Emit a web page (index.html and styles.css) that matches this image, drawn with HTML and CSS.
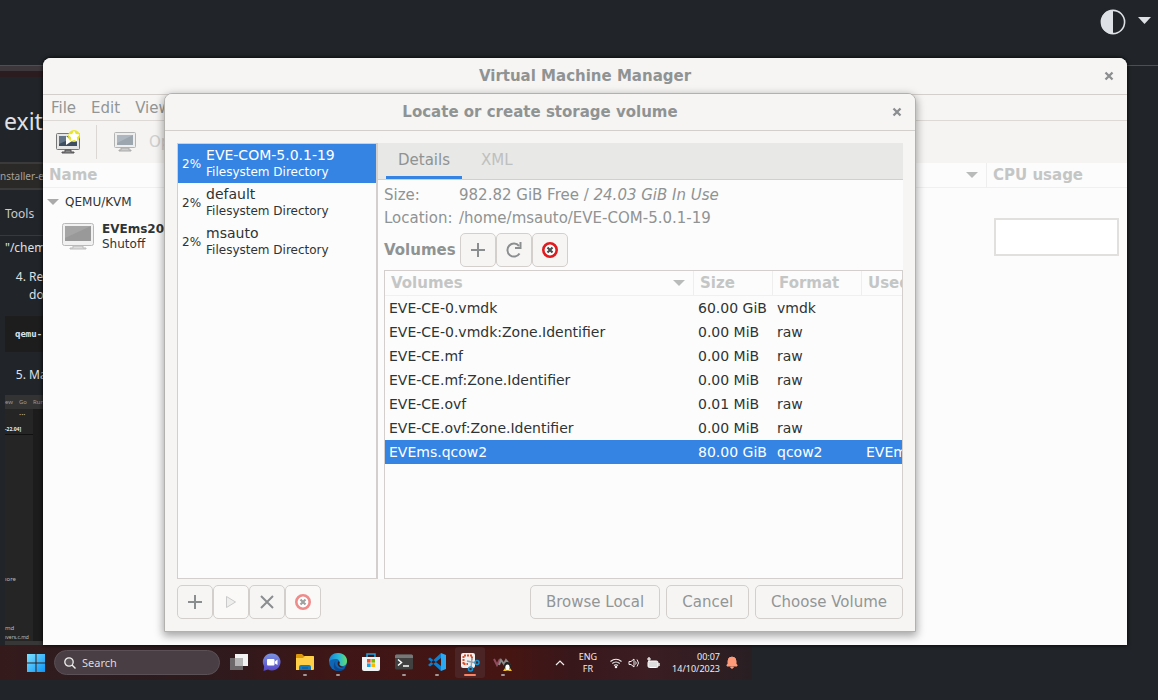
FILE: index.html
```
<!DOCTYPE html>
<html lang="en">
<head>
<meta charset="utf-8">
<title>Virtual Machine Manager</title>
<link rel="stylesheet" href="styles.css">
</head>
<body>
<div class="desktop">
  <header class="site-bar">
    <button class="theme" aria-label="Theme">
      <svg width="52" height="26" viewBox="0 0 52 26"><circle cx="13" cy="13" r="11.6" fill="none" stroke="#dee2e6" stroke-width="1.6"/><path d="M13 1a12 12 0 0 0 0 24z" fill="#dee2e6"/><path d="M38 8h13l-6.500 7z" fill="#dee2e6"/></svg>
    </button>
  </header>

  <main class="article">
    <div class="strip"></div>
    <h1 class="exit">exit</h1>
    <div class="file-tab">nstaller-ev</div>
    <div class="tools">Tools</div>
    <div class="path">"/chem</div>
    <ol class="steps" start="4"><li>Re<br>do</li></ol>
    <pre class="code">qemu-</pre>
    <ol class="steps last" start="5"><li>Ma</li></ol>
    <div class="editor">
      <div class="editor-menu"><span>ew</span><span>Go</span><span>Run</span></div>
      <div class="editor-side">
        <div class="dots">···</div>
        <div class="version">-22.04]</div>
        <div class="tree-a">ıore</div>
        <div class="tree-b">md</div>
        <div class="tree-c">ıvers.c.md</div>
      </div>
    </div>
  </main>

  <nav class="taskbar" aria-label="Taskbar">
    <button class="start" aria-label="Start"><svg width="18" height="18" viewBox="0 0 18 18"><defs><linearGradient id="w" x2="1" y2="1"><stop stop-color="#7be0ff"/><stop offset="1" stop-color="#0c94f5"/></linearGradient></defs><path d="M0 0h8.500v8.500H0zM9.500 0H18v8.500H9.500zM0 9.500h8.500V18H0zM9.500 9.500H18V18H9.500z" fill="url(#w)"/></svg></button>
    <label class="search"><svg width="12" height="12" viewBox="0 0 12 12"><circle cx="5" cy="5" r="4.200" fill="#5b5358" stroke="#eee" stroke-width="1.300"/><path d="M8 8l3.500 3.500" stroke="#eee" stroke-width="1.400"/></svg><input type="text" placeholder="Search" aria-label="Search"></label>
    <div class="apps">
      <button class="app" aria-label="Task view"><svg width="20" height="20" viewBox="0 0 20 20"><path d="M6 2h13v12H6z" fill="#f2f2f2"/><path d="M1 6h13v12H1z" fill="#777" opacity=".85"/><path d="M6 6h8v8H6z" fill="#b5b5b5"/></svg></button>
      <button class="app" aria-label="Chat"><svg width="20" height="20" viewBox="0 0 20 20"><defs><linearGradient id="c" x2="0" y2="1"><stop stop-color="#7b94df"/><stop offset="1" stop-color="#5646c8"/></linearGradient></defs><path d="M10 1.500a8.500 8.500 0 1 1-4 16L1.500 19l.7-4.500A8.500 8.500 0 0 1 10 1.500z" fill="url(#c)"/><rect x="5" y="7" width="7.500" height="6.500" rx="1" fill="#fff"/><path d="M13 9.500l2.500-2v5.500L13 11.500z" fill="#fff"/></svg></button>
      <button class="app open" aria-label="Files"><svg width="20" height="20" viewBox="0 0 20 20"><path d="M1 3q0-1 1-1h5l2 2h9q1 0 1 1v5H1z" fill="#dc9808"/><path d="M1 6h7l2-2h8q1 0 1 1v12q0 1-1 1H1z" fill="#ffcf48"/><path d="M4 18v-3q0-2 2-2h8q2 0 2 2v3z" fill="#1479bd"/><path d="M7 16h6" stroke="#0a548d"/></svg></button>
      <button class="app open" aria-label="Edge"><svg width="20" height="20" viewBox="0 0 20 20"><defs><linearGradient id="e" x2="1"><stop stop-color="#1681d7"/><stop offset=".55" stop-color="#28b9d6"/><stop offset="1" stop-color="#67dc65"/></linearGradient></defs><circle cx="10" cy="10" r="9" fill="#0e66b5"/><path d="M1 10C1 4 5 1 10 1c6 0 9 4 9 8 0 3-2 5-5 5-2 0-3-.7-2.500-2 1-3-1-5-4-5C4 7 2 8 1 10z" fill="url(#e)"/><path d="M7.500 9c-1.500 4 1.500 8 6 8 2 0 3.500-.7 4.500-2-1 2.500-4 4-7 4-5 0-7-5-3.500-10z" fill="#0b4a92"/><path d="M10.500 9q-2 3 .5 5.500 2 1.700 5.500.5-3 .5-5-2-.7-1 .2-2.500z" fill="#3b161b"/></svg></button>
      <button class="app" aria-label="Store"><svg width="20" height="20" viewBox="0 0 20 20"><path d="M6 5V2h8v3" fill="none" stroke="#21a3e0" stroke-width="1.500"/><path d="M1 5h18v12q0 2-2 2H3q-2 0-2-2z" fill="#f1f2f3"/><path d="M6 7h3.600v3.600H6z" fill="#f05023"/><path d="M10.400 7H14v3.600h-3.600z" fill="#7db800"/><path d="M6 11.400h3.600V15H6z" fill="#16a2e8"/><path d="M10.400 11.400H14V15h-3.600z" fill="#fdb900"/></svg></button>
      <button class="app open" aria-label="Terminal"><svg width="20" height="20" viewBox="0 0 20 20"><rect x="1" y="2.500" width="18" height="15" rx="1.500" fill="#414141"/><path d="M1 4q0-1.500 1.500-1.500h15Q19 2.500 19 4v2H1z" fill="#777"/><path d="M4 7.500l3.500 3L4 13.500" fill="none" stroke="#fff" stroke-width="1.500"/><path d="M9 14h6" stroke="#fff" stroke-width="1.500"/></svg></button>
      <button class="app open" aria-label="Code"><svg width="20" height="20" viewBox="0 0 20 20"><path d="M14 1l5 2v14l-5 2z" fill="#2aa8f2"/><path d="M14 1v5L3 14.500 1 13zM14 19v-5L3 5.500 1 7z" fill="#0b7fd0"/></svg></button>
      <button class="app open active" aria-label="Snipping tool"><svg width="20" height="20" viewBox="0 0 20 20"><rect x="1" y="1" width="14" height="15" rx="2" fill="#eceef0"/><path d="M3.500 12V3.500H12V8M3.500 12H8" fill="none" stroke="#e04b22" stroke-width="2" stroke-dasharray="2 1"/><path d="M7 9l9 2M12 6l-1 10" stroke="#96a0a8" stroke-width="1.400"/><circle cx="17" cy="10.500" r="2" fill="none" stroke="#1694d5" stroke-width="1.500"/><circle cx="10.500" cy="17" r="2" fill="none" stroke="#1694d5" stroke-width="1.500"/></svg></button>
      <button class="app open" aria-label="Linux window"><svg width="20" height="20" viewBox="0 0 20 20"><path d="M1 7l3 6 3-6" fill="none" stroke="#914b5e" stroke-width="2"/><path d="M6 13l2-5 3 4 2-4 4 5" fill="none" stroke="#8a8a8a" stroke-width="2"/><ellipse cx="14.500" cy="14.500" rx="3.500" ry="4.500" fill="#222"/><ellipse cx="14.500" cy="15.500" rx="2.200" ry="3" fill="#fff"/><path d="M10 19l2-3 2 3zM15 19l2-3 2 3z" fill="#f8bd20"/></svg></button>
    </div>
    <div class="tray">
      <svg class="chev" width="10" height="6" viewBox="0 0 10 6"><path d="M1 5l4-4 4 4" fill="none" stroke="#eee" stroke-width="1.200"/></svg>
      <div class="lang">ENG<br>FR</div>
      <div class="status">
      <svg width="12" height="12" viewBox="0 0 12 12" fill="none" stroke="#eee" stroke-width="1.200"><path d="M.5 4.500q5.500-4.500 11 0M2.300 6.500q3.700-3 7.400 0M4 8.500q2-1.500 4 0"/><circle cx="6" cy="10" r=".7" fill="#eee"/></svg>
      <svg width="12" height="12" viewBox="0 0 12 12" fill="none" stroke="#eee"><path d="M1 4.500h2L6 2v8L3 7.500H1zM7.500 4.500q1.500 1.500 0 3M9 2.500q3 3.500 0 7"/></svg>
      <svg width="14" height="12" viewBox="0 0 14 12"><rect x="2" y="4" width="10" height="6.500" rx="1.500" fill="#ddd" stroke="#fff"/><path d="M13 6v3" stroke="#eee" stroke-width="1.500"/><path d="M3 0v5M1 2h4" stroke="#fff" stroke-width="1.200"/></svg>
      </div>
      <div class="clock">00:07<br>14/10/2023</div>
      <svg width="12" height="14" viewBox="0 0 12 14"><path d="M1 10V9l1-1.500V5q0-4 4-4t4 4v2.500L11 9v1zM4.500 11h3q-1.500 3-3 0z" fill="#ff9b78" stroke="#ff9b78"/></svg>
    </div>
  </nav>

  <section class="window manager">
    <div class="title">
      <h2>Virtual Machine Manager</h2>
      <button class="close" aria-label="Close"><svg width="10" height="10" viewBox="0 0 10 10"><path d="M1.500 1.500l7 7M8.500 1.500l-7 7" stroke="#8b8e8f" stroke-width="2.300"/></svg></button>
    </div>
    <div class="menu"><button>File</button><button>Edit</button><button>View</button></div>
    <div class="toolbar">
      <button aria-label="New virtual machine"><svg width="26" height="26" viewBox="0 0 26 26"><rect x="1.500" y="4.500" width="23" height="16" rx="1" fill="#e6e6e6" stroke="#777"/><path d="M4 7h18v10H4z" fill="#3e4d60"/><path d="M4 7h18L4 15z" fill="#66768a"/><path d="M11 7v9l6-4z" fill="#fff"/><path d="M10 21h6v2h3v1H7v-1h3z" fill="#888" stroke="#555"/><circle cx="19" cy="7" r="6" fill="#e8e52c"/><path d="M19 1.500l1.800 3.500 4 .6-3 3 .7 4-3.500-1.800-3.500 1.800.7-4-3-3 4-.6z" fill="#fff"/></svg></button>
      <span class="sep"></span>
      <button class="open-vm"><svg width="24" height="24" viewBox="0 0 24 24"><rect x="1.500" y="2.500" width="21" height="15" rx="1" fill="#eee" stroke="#b3b5b5"/><path d="M4 5h16v10H4z" fill="#9ba6af"/><path d="M4 5h16L4 13z" fill="#aeb7bf"/><path d="M8 18h8v2h2v1H6v-1h2z" fill="#ccc" stroke="#aaa"/></svg>Open</button>
    </div>
    <table class="vms">
      <thead><tr><th>Name</th><th class="sort"><svg width="12" height="6" viewBox="0 0 12 6"><path d="M0 0h12L6 6z" fill="#b9bbbb"/></svg></th><th>CPU usage</th></tr></thead>
      <tbody>
        <tr><td colspan="3"><div class="host"><svg width="12" height="6" viewBox="0 0 12 6"><path d="M0 0h12L6 6z" fill="#aaa"/></svg>QEMU/KVM</div></td></tr>
        <tr><td colspan="2"><div class="vm"><svg width="34" height="30" viewBox="0 0 34 30"><rect x="1.500" y="1.500" width="31" height="22" rx="2" fill="#f1f1f1" stroke="#b9b9b9"/><path d="M4 4h26v15H4z" fill="#999"/><path d="M4 4h26L4 16z" fill="#a5a5a5"/><path d="M12 24h10v2h3v1H9v-1h3z" fill="#ddd" stroke="#bbb"/></svg><span><b>EVEms20</b><br>Shutoff</span></div></td><td><div class="graph"></div></td></tr>
      </tbody>
    </table>
  </section>

  <section class="window dialog" role="dialog" aria-label="Locate or create storage volume">
    <div class="title">
      <h2>Locate or create storage volume</h2>
      <button class="close" aria-label="Close"><svg width="10" height="10" viewBox="0 0 10 10"><path d="M1.500 1.500l7 7M8.500 1.500l-7 7" stroke="#8b8e8f" stroke-width="2.300"/></svg></button>
    </div>
    <div class="body">
      <div class="panes">
        <div class="pools">
          <button class="pool selected"><span>2%</span><span><span class="pool-name">EVE-COM-5.0.1-19</span>Filesystem Directory</span></button>
          <button class="pool"><span>2%</span><span><span class="pool-name">default</span>Filesystem Directory</span></button>
          <button class="pool"><span>2%</span><span><span class="pool-name">msauto</span>Filesystem Directory</span></button>
        </div>
        <div class="details">
          <div class="tabs"><button class="tab current">Details</button><button class="tab">XML</button></div>
          <dl class="facts">
            <dt>Size:</dt><dd>982.82 GiB Free / <i>24.03 GiB In Use</i></dd>
            <dt>Location:</dt><dd>/home/msauto/EVE-COM-5.0.1-19</dd>
          </dl>
          <div class="vol-bar">
            <b>Volumes</b>
            <div class="group">
              <button class="btn icon" aria-label="Add volume"><svg width="16" height="16" viewBox="0 0 16 16"><path d="M8 1v14M1 8h14" stroke="#8b8e8f" stroke-width="2"/></svg></button>
              <button class="btn icon" aria-label="Refresh"><svg width="18" height="18" viewBox="0 0 18 18"><path d="M14.500 12.500A6.500 6.500 0 1 1 14 5" fill="none" stroke="#8b8e8f" stroke-width="2"/><path d="M16.500 1v7H10V6h4.500V1z" fill="#8b8e8f"/></svg></button>
              <button class="btn icon" aria-label="Delete volume"><svg width="18" height="18" viewBox="0 0 18 18"><circle cx="9" cy="9" r="6.700" fill="#fff" stroke="#e01b1f" stroke-width="2.600"/><path d="M6.500 6.500l5 5M11.500 6.500l-5 5" stroke="#494d4e" stroke-width="2.200"/></svg></button>
            </div>
          </div>
          <div class="vol-frame">
            <table class="volumes">
              <colgroup><col class="c-name"><col class="c-size"><col class="c-format"><col class="c-used"></colgroup>
              <thead><tr><th><div class="th-sort">Volumes<svg width="12" height="6" viewBox="0 0 12 6"><path d="M0 0h12L6 6z" fill="#b9bbbb"/></svg></div></th><th>Size</th><th>Format</th><th>Used</th></tr></thead>
              <tbody>
                <tr><td>EVE-CE-0.vmdk</td><td>60.00 GiB</td><td>vmdk</td><td></td></tr>
                <tr><td>EVE-CE-0.vmdk:Zone.Identifier</td><td>0.00 MiB</td><td>raw</td><td></td></tr>
                <tr><td>EVE-CE.mf</td><td>0.00 MiB</td><td>raw</td><td></td></tr>
                <tr><td>EVE-CE.mf:Zone.Identifier</td><td>0.00 MiB</td><td>raw</td><td></td></tr>
                <tr><td>EVE-CE.ovf</td><td>0.01 MiB</td><td>raw</td><td></td></tr>
                <tr><td>EVE-CE.ovf:Zone.Identifier</td><td>0.00 MiB</td><td>raw</td><td></td></tr>
                <tr class="selected"><td>EVEms.qcow2</td><td>80.00 GiB</td><td>qcow2</td><td>EVEm</td></tr>
              </tbody>
            </table>
          </div>
        </div>
      </div>
      <div class="actions">
        <div class="group">
          <button class="btn icon" aria-label="Add pool"><svg width="16" height="16" viewBox="0 0 16 16"><path d="M8 1v14M1 8h14" stroke="#8b8e8f" stroke-width="2"/></svg></button>
          <button class="btn icon off" aria-label="Start pool"><svg width="14" height="14" viewBox="0 0 14 14"><path d="M2.500 1.500v11l9-5.500z" fill="#eeeeed" stroke="#c9cac9"/></svg></button>
          <button class="btn icon" aria-label="Stop pool"><svg width="14" height="14" viewBox="0 0 14 14"><path d="M1 1l12 12M13 1L1 13" stroke="#8b8e8f" stroke-width="2"/></svg></button>
          <button class="btn icon off" aria-label="Delete pool"><svg width="18" height="18" viewBox="0 0 18 18"><circle cx="9" cy="9" r="6.700" fill="#fff" stroke="#ed8c8b" stroke-width="2.600"/><path d="M6.500 6.500l5 5M11.500 6.500l-5 5" stroke="#9fa1a1" stroke-width="2.200"/></svg></button>
        </div>
        <div class="choices">
          <button class="btn">Browse Local</button><button class="btn">Cancel</button><button class="btn">Choose Volume</button>
        </div>
      </div>
    </div>
  </section>
</div>
</body>
</html>
```
FILE: styles.css
```
* { box-sizing: border-box; }
body { margin: 0; background: #212529; color: #2e3436; font: 15px/18px "DejaVu Sans", sans-serif; }
button { font: inherit; color: inherit; background: none; border: 0; padding: 0; margin: 0; }
svg { display: block; flex: none; }
h1, h2, dl, dd, pre, ol { margin: 0; padding: 0; }
table { border-spacing: 0; border-collapse: separate; }
th, td { padding: 0; text-align: left; font-weight: normal; white-space: nowrap; }

.desktop { position: relative; min-height: 100vh; display: flex; flex-direction: column; overflow: hidden; }

/* page behind the windows */
.site-bar { height: 66px; padding: 9px 6px; display: flex; justify-content: flex-end; align-items: flex-start; border-bottom: 1px solid #495057; }
.article { width: 752px; max-width: 100%; color: #dee2e6; font-family: "Noto Sans", sans-serif; white-space: nowrap; }
.strip { height: 11px; background: #2b1c20; border-top: 5px solid #3d373b; }
.exit { padding: 28px 4px 0; font-size: 23px; line-height: 32px; font-weight: 400; }
.file-tab { height: 28px; margin-top: 25px; background: #2a2928; border: solid #3a3a3a; border-width: 2px 0; font-size: 10px; line-height: 24px; color: #a5a29f; }
.tools { padding: 14px 5px 12px; font-size: 12px; line-height: 19px; color: #c9cdd0; border-bottom: 1px solid #343a40; }
.path { padding: 3px 5px; font-size: 12px; line-height: 18px; }
.steps { padding: 8px 0 0 29px; font-size: 12px; line-height: 18px; }
.steps.last { padding-top: 14px; }
.code { margin: 12px 0 0 5px; padding: 9px 10px; height: 36px; background: #1d1d1d; font: bold 9px/18px "DejaVu Sans Mono", monospace; }
.editor { margin: 11px 0 0 5px; height: 250px; background: #1c1c1c; border-bottom: 4px solid #373737; font-size: 6px; line-height: 8px; }
.editor-menu { height: 14px; display: flex; align-items: center; gap: 6px; background: #333; color: #999; }
.editor-side { width: 28px; height: 232px; background: #252525; color: #bbb; }
.dots { height: 12px; padding: 2px 14px; font-size: 8px; }
.version { height: 14px; padding-top: 4px; font-size: 5px; font-weight: 700; color: #eee; border-bottom: 1px solid #111; }
.tree-a { padding-top: 140px; }
.tree-b { padding-top: 41px; }
.tree-c { padding-top: 1px; font-size: 5px; }

/* taskbar */
.taskbar { width: 752px; max-width: 100%; height: 35px; display: flex; align-items: center; background: linear-gradient(90deg, #351a1b, #2b1d20 12%, #2e1a1d 28%, #3f1616 45%, #451512 68%, #38171b 76%, #3b1d22 86%, #281f23); color: #f0eeee; font: 9px/12px "Noto Sans", sans-serif; }
.start { margin-left: 27px; }
.search { margin-left: 9px; width: 166px; height: 25px; padding: 0 9px; display: flex; align-items: center; gap: 6px; border: 1px solid #5b5055; border-radius: 13px; background: #493e43; }
.search input { width: 100%; min-width: 0; padding: 0; border: 0; background: none; font: 11px "Noto Sans", sans-serif; color: #e8e4e5; }
.search input::placeholder { color: #ded9db; opacity: 1; }
.apps { display: flex; gap: 3px; margin-left: 4px; }
.app { width: 30px; height: 31px; display: flex; flex-direction: column; align-items: center; padding-top: 5px; gap: 2px; border-radius: 3px; }
.open::after { content: ""; width: 4px; height: 2px; border-radius: 1px; background: #a39797; }
.active { background: #4b2525; }
.active::after { width: 12px; background: #fa8365; }
.tray { flex: 1; display: flex; align-items: center; justify-content: flex-end; padding-right: 14px; }
.lang { margin-left: 14px; text-align: center; }
.status { display: flex; gap: 6px; margin-left: 13px; }
.clock { margin: 0 6px 0 12px; text-align: right; }

/* windows */
.window { position: absolute; background: #f6f5f4; border-radius: 8px 8px 0 0; overflow: hidden; }
.manager { left: 43px; right: 31px; top: 58px; height: 587px; background: #fcfcfc; box-shadow: 0 0 4px #000; }
.dialog { left: 164px; width: 752px; top: 93px; border: 1px solid #b3b1ae; box-shadow: 0 3px 9px 1px rgba(0,0,0,.35); }
.title { position: relative; height: 37px; display: flex; align-items: center; justify-content: center; background: #f6f5f4; border-bottom: 1px solid #d3cfcc; }
.title h2 { font-size: 15px; line-height: 18px; color: #8f9393; }
.close { position: absolute; right: 13px; top: 13px; }
.menu { height: 26px; display: flex; gap: 15px; padding: 0 8px; color: #929595; background: #f6f5f4; border-bottom: 1px solid #dcd9d6; }
.toolbar { height: 42px; display: flex; align-items: center; padding: 0 12px; background: #f5f4f2; }
.sep { width: 1px; height: 34px; margin: 0 16px 0 15px; background: #dad7d4; }
.open-vm { display: flex; align-items: center; gap: 12px; color: #cfd0cf; }
.vms { width: 100%; table-layout: fixed; font-size: 12px; line-height: 15px; }
.vms th { height: 25px; padding-left: 6px; font-size: 15px; font-weight: 700; color: #c4c6c6; border-bottom: 1px solid #f0f0ef; }
.vms th:last-child { width: 141px; border-left: 1px solid #eee; }
.vms th.sort { width: 20px; padding: 0; }
.host { height: 28px; padding-left: 4px; display: flex; align-items: center; gap: 6px; }
.vm { height: 41px; padding-left: 18px; display: flex; align-items: center; gap: 7px; }
.graph { width: 125px; height: 38px; margin-left: 8px; border: 2px solid #e2dfdf; background: #fff; }

/* storage dialog */
.body { padding: 12px; }
.panes { display: flex; height: 436px; }
.pools { width: 201px; flex: none; border: 1px solid #d3cfcc; border-right-width: 2px; background: #fcfcfc; }
.pool { width: 100%; height: 39px; padding-left: 4px; display: flex; align-items: center; gap: 5px; text-align: left; font-size: 12px; line-height: 16px; }
.pool-name { display: block; font-size: 14px; line-height: 17px; }
.pool.selected, .volumes .selected { background: #3584e4; color: #fff; }
.details { flex: 1; min-width: 0; display: flex; flex-direction: column; background: #fcfcfc; color: #8f9393; }
.tabs { height: 37px; padding-left: 8px; display: flex; background: #e8e8e6; border-bottom: 1px solid #d3cfcc; }
.tab { height: 36px; padding: 0 12px; color: #bec0bf; border-bottom: 3px solid transparent; }
.tab + .tab { padding-left: 19px; }
.current { color: #8f9393; border-color: #3584e4; }
.facts { padding: 4px 6px 3px; display: grid; grid-template-columns: 75px 1fr; line-height: 23px; }
.vol-bar { padding-left: 6px; display: flex; align-items: center; gap: 4px; }
.group { display: flex; }
.btn { height: 34px; padding: 0 15px; border: 1px solid #d3cfcc; border-radius: 5px; background: #f6f5f4; color: #929595; }
.icon { width: 36px; padding: 0; display: flex; align-items: center; justify-content: center; }
.off { background: #faf9f8; }
.vol-frame { flex: 1; margin: 3px 0 0 6px; overflow: hidden; border: 1px solid #d3cfcc; }
.volumes { width: 627px; table-layout: fixed; color: #2e3436; }
.c-name { width: 308px; }
.c-size { width: 79px; }
.c-format { width: 89px; }
.volumes th { height: 25px; padding-left: 6px; font-weight: 700; color: #c4c6c6; border-bottom: 1px solid #f0f0ef; }
.volumes th + th { border-left: 1px solid #eee; }
.volumes td { height: 24px; padding-left: 4px; font-size: 14px; }
.volumes td + td { padding-left: 5px; }
.th-sort { display: flex; align-items: center; justify-content: space-between; padding-right: 8px; }
.actions { display: flex; justify-content: space-between; padding-top: 6px; }
.choices { display: flex; gap: 6px; }
```
